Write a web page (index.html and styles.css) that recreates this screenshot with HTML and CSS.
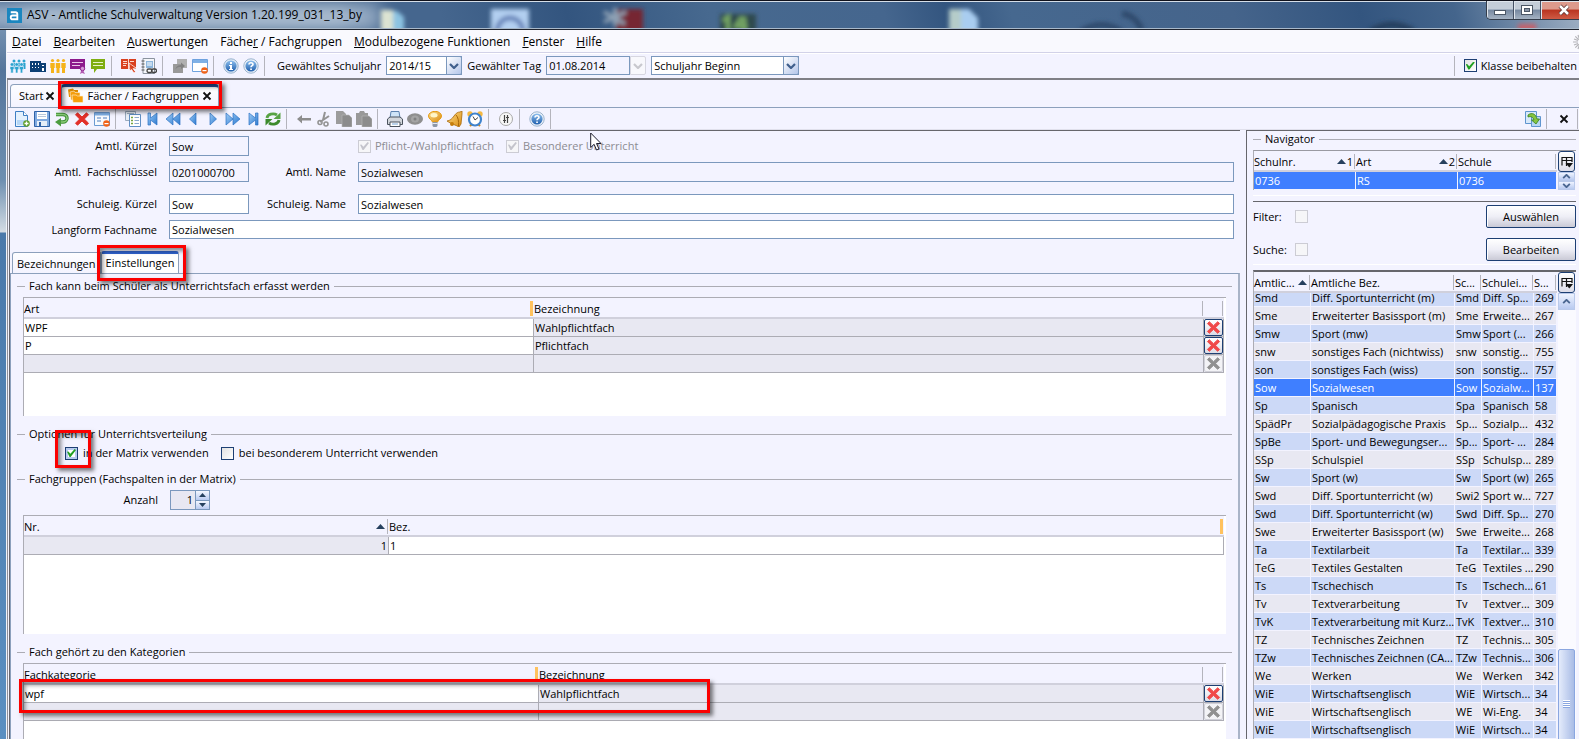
FILE: index.html
```html
<!DOCTYPE html>
<html lang="de">
<head>
<meta charset="utf-8">
<title>ASV - Amtliche Schulverwaltung</title>
<link rel="stylesheet" href="styles.css">
</head>
<body>
<svg class="symbols" aria-hidden="true">
  <defs>
    <linearGradient id="blue" x1="0" y1="0" x2="0" y2="1"><stop offset="0" stop-color="#8fc0ee"/><stop offset="1" stop-color="#1f5fae"/></linearGradient>
    <linearGradient id="arrowblue" x1="0" y1="0" x2="1" y2="1"><stop offset="0" stop-color="#9ccbf5"/><stop offset="1" stop-color="#2f7bd0"/></linearGradient>
    <linearGradient id="gold" x1="0" y1="0" x2="1" y2="1"><stop offset="0" stop-color="#ffe08a"/><stop offset="1" stop-color="#d98a10"/></linearGradient>
    <symbol id="people" viewBox="0 0 16 16"><g fill="currentColor"><circle cx="4" cy="3" r="1.500"/><circle cx="9" cy="3" r="1.500"/><circle cx="14" cy="3" r="1.500"/><path d="M2.500 5h3v6h-3zM7.500 5h3v6h-3zM12.500 5h3v6h-3z"/><g stroke="#f3f3ff" stroke-width=".6"><circle cx="2" cy="6.500" r="1.800"/><circle cx="6.700" cy="6.500" r="1.800"/><circle cx="11.500" cy="6.500" r="1.800"/><path d="M0 8.500h4v3H3.200V15H.8v-3.500H0zM4.700 8.500h4v3h-.8V15H5.500v-3.500h-.8zM9.500 8.500h4v3h-.8V15h-2.400v-3.500h-.8z"/></g></g></symbol>
    <symbol id="school" viewBox="0 0 16 16"><path d="M0 3h11v2h5v9H0z" fill="#0c3f75"/><path d="M2 5h1v2H2zM5 5h1v2H5zM8 5h1v2H8zM2 9h1v1H2zM5 9h1v1H5zM8 9h1v1H8zM12 7h2v1h-2zM12 10h2v3h-2z" fill="#fff"/></symbol>
    <symbol id="trio" viewBox="0 0 16 16"><g fill="#f5b31a"><circle cx="2.500" cy="2.500" r="1.600"/><circle cx="8" cy="2.500" r="1.600"/><circle cx="13.500" cy="2.500" r="1.600"/><path d="M.3 5h4.400v5H4v5H1v-5H.3zM5.800 5h4.400v5h-.7v5h-3v-5h-.7zM11.300 5h4.400v5H15v5h-3v-5h-.7z"/></g></symbol>
    <symbol id="certificate" viewBox="0 0 16 16"><path d="M0 1h15v10H0z" fill="#8c1a8c"/><path d="M2 4h11v1H2zM2 7h8v1H2z" fill="#e9c6e9"/><circle cx="12.500" cy="10.500" r="2.200" fill="#d79ad7" stroke="#8c1a8c"/><path d="M11 13l-1 3 2-1 3 1-1.500-3" fill="#b25cb2"/></symbol>
    <symbol id="board" viewBox="0 0 16 16"><path d="M1 1h14v10H7l-3 4v-4H1z" fill="#7fae12"/><path d="M3 4h10v1H3zM3 7h10v1H3z" fill="#e8f3c8"/></symbol>
    <symbol id="redbook" viewBox="0 0 16 16"><path d="M0 1h15v10H0z" fill="#d9401f"/><path d="M7 1h1v10H7zM2 3h4v1H2zM2 5h4v1H2zM2 7h3v1H2zM9 3h4v1H9z" fill="#fbd9cf"/><path d="M8 5l7 5-3 .6 2.500 3.200-1.500 1.200-2.500-3.500L9 13z" fill="#d9401f" stroke="#fff" stroke-width=".7"/></symbol>
    <symbol id="notebook" viewBox="0 0 16 16"><path d="M2 .5h11.500v15H2z" fill="#f4f6fa" stroke="#8b939e"/><path d="M5 3h7v7H5z" fill="#8db6dd"/><path d="M6 5h5M6 7h5" stroke="#fff"/><path d="M.5 3h3M.5 6h3M.5 9h3M.5 12h3" stroke="#555"/><rect x="6" y="11" width="5" height="3.500" rx="1.700" fill="#fff" stroke="#444" stroke-width="1.300"/><rect x="10.500" y="11" width="5" height="3.500" rx="1.700" fill="none" stroke="#444" stroke-width="1.300"/></symbol>
    <symbol id="graycopy" viewBox="0 0 16 16"><path d="M5 1h10v9H5z" fill="#b0b0b0"/><path d="M1 6h10v9H1z" fill="#999"/><path d="M3.500 11.500C4 8 7 7 9 7V4.500L13 8l-4 3V9c-2 0-4 0-5.500 2.500z" fill="#818181"/></symbol>
    <symbol id="windel" viewBox="0 0 16 16"><path d="M.5 1.500h15v12H.5z" fill="#fff" stroke="#6ea2de"/><path d="M1 2h14v3H1z" fill="#7fb0e6"/><circle cx="12.500" cy="12.500" r="3.300" fill="#f0631a"/><path d="M10.500 12h4v1.200h-4z" fill="#fff"/></symbol>
    <symbol id="info" viewBox="0 0 16 16"><circle cx="8" cy="8" r="7.200" fill="#dbe8f5" stroke="#9bb4ce"/><circle cx="8" cy="8" r="5.600" fill="url(#blue)"/><path d="M7 4h2v2H7zM6 7h3v4h1v1H6v-1h1V8H6z" fill="#fff"/></symbol>
    <symbol id="help" viewBox="0 0 16 16"><circle cx="8" cy="8" r="7.200" fill="#eef3fa" stroke="#9bb4ce"/><circle cx="8" cy="8" r="5.600" fill="url(#blue)"/><path d="M6 6.500a2 1.800 0 114 0c0 1.200-2 1.200-2 2.800" fill="none" stroke="#fff" stroke-width="1.600"/><path d="M7.200 10.500h1.700V12H7.200z" fill="#fff"/></symbol>
    <symbol id="folders" viewBox="0 0 16 16"><path d="M0 1.500l5-1 1 1.500h4v7H1z" fill="#e08c00"/><path d="M2 4l4-1 1 1.500h5V12H3z" fill="#f59e0c" stroke="#fff3dc" stroke-width=".6"/><path d="M4 7h4l1.500 1H15v6.500H5z" fill="#f59e0c" stroke="#fff3dc" stroke-width=".6"/></symbol>
    <symbol id="newdoc" viewBox="0 0 16 16"><path d="M1.500.5h8l4 4v11h-12z" fill="#e4f1fd" stroke="#3f7fc4"/><path d="M9.500.5v4h4" fill="#fff" stroke="#3f7fc4"/><path d="M3 9h9v5H3z" fill="#b4d6f6"/><circle cx="12.500" cy="12.500" r="3.300" fill="#5f9e2a"/><path d="M12.500 10.500v4M10.500 12.500h4" stroke="#fff" stroke-width="1.300"/></symbol>
    <symbol id="save" viewBox="0 0 16 16"><path d="M.5.5h15v15H.5z" fill="#7fa9e0" stroke="#2f62a8"/><path d="M3 1h10v7H3z" fill="#fff"/><path d="M4 3.500h8M4 5.500h8" stroke="#b9c8dc"/><path d="M3 10h10v5H3z" fill="#e6eef8"/><path d="M5 11h2v4H5z" fill="#2f62a8"/></symbol>
    <symbol id="undo" viewBox="0 0 16 16"><path d="M2 3.500h7a4 3.700 0 010 7.500H6" fill="none" stroke="#3f8f36" stroke-width="3.400"/><path d="M2 3.500h7a4 3.700 0 010 7.500H6" fill="none" stroke="#8ccc7a" stroke-width="1.400"/><path d="M7 7v8.500l-6-4.500z" fill="#4c9c40"/></symbol>
    <symbol id="cross" viewBox="0 0 16 16"><path d="M3.500 1.800L8 6l4.500-4.200 2 2L10.300 8l4.200 4.200-2 2L8 10l-4.500 4.200-2-2L5.700 8 1.500 3.800z" fill="currentColor" stroke="currentColor" stroke-linejoin="round"/></symbol>
    <symbol id="listdel" viewBox="0 0 16 16"><path d="M.5 1.500h15v13H.5z" fill="#f7fafe" stroke="#6b9bd2"/><path d="M1 2h14v2.500H1z" fill="#7fb0e6"/><path d="M3 7h4M3 10h4M9 7h4" stroke="#4d7fbf"/><circle cx="12.500" cy="12.500" r="3.300" fill="#f0631a"/><path d="M10.500 12h4v1.200h-4z" fill="#fff"/></symbol>
    <symbol id="sheet" viewBox="0 0 16 16"><path d="M.5.500h10v9H.5z" fill="#e8eef6" stroke="#9aaabd"/><path d="M4.500 3.500h11v12h-11z" fill="#fff" stroke="#5f8fc4"/><path d="M6 6.500h2M6 9.500h2M6 12.500h2" stroke="#76a53c" stroke-width="1.500"/><path d="M9.500 6.500H14M9.500 9.500H14M9.500 12.500H14" stroke="#8ba9cc"/><path d="M2 2.500h7" stroke="#9aaabd"/></symbol>
    <symbol id="first" viewBox="0 0 16 16"><path d="M3 2h2.500v5L12 2v12L5.500 9v5H3z" fill="url(#arrowblue)" stroke="#2f74c4" stroke-width=".7"/></symbol>
    <symbol id="fastback" viewBox="0 0 16 16"><path d="M8 2v12L1 8zM15 2v12L8 8z" fill="url(#arrowblue)" stroke="#2f74c4" stroke-width=".7"/></symbol>
    <symbol id="back" viewBox="0 0 16 16"><path d="M11 2v12L4.500 8z" fill="url(#arrowblue)" stroke="#2f74c4" stroke-width=".7"/></symbol>
    <symbol id="next" viewBox="0 0 16 16"><path d="M5 2v12l6.500-6z" fill="url(#arrowblue)" stroke="#2f74c4" stroke-width=".7"/></symbol>
    <symbol id="fastnext" viewBox="0 0 16 16"><path d="M1 2v12l7-6zM8 2v12l7-6z" fill="url(#arrowblue)" stroke="#2f74c4" stroke-width=".7"/></symbol>
    <symbol id="last" viewBox="0 0 16 16"><path d="M13 2h-2.500v5L4 2v12l6.500-5v5H13z" fill="url(#arrowblue)" stroke="#2f74c4" stroke-width=".7"/></symbol>
    <symbol id="refresh" viewBox="0 0 16 16"><path d="M2 7a6 4.500 0 0110-3" fill="none" stroke="#58a344" stroke-width="2.800"/><path d="M15.500 1.500v6.500H8.500z" fill="#58a344"/><path d="M14 9a6 4.500 0 01-10 3" fill="none" stroke="#3c8a2c" stroke-width="2.800"/><path d="M.5 14.500V8h7z" fill="#3c8a2c"/></symbol>
    <symbol id="grayleft" viewBox="0 0 16 16"><path d="M6 4v3h9v2.500H6v3L1 8z" fill="#8d8d8d"/></symbol>
    <symbol id="scissors" viewBox="0 0 16 16"><path d="M9 1L7 9M13 5l-9 6" stroke="#949494" stroke-width="2"/><circle cx="4" cy="11.500" r="2" fill="none" stroke="#949494" stroke-width="1.600"/><circle cx="10" cy="13" r="2" fill="none" stroke="#949494" stroke-width="1.600"/></symbol>
    <symbol id="pages" viewBox="0 0 16 16"><path d="M0 0h7l3 3v10H0z" fill="#9c9c9c"/><path d="M6 4h7l3 3v9H6z" fill="#8c8c8c" stroke="#b9b9b9" stroke-width=".6"/></symbol>
    <symbol id="paste" viewBox="0 0 16 16"><path d="M0 2h3l1-2h4l1 2h3v12H0z" fill="#999"/><path d="M6 5h7l3 3v8H6z" fill="#8c8c8c" stroke="#b9b9b9" stroke-width=".6"/></symbol>
    <symbol id="printer" viewBox="0 0 16 16"><path d="M4 .5h8l1 6.500H3z" fill="#cfe4f8" stroke="#5d83b0"/><path d="M.5 8L3 6h10l2.500 2v5.500H.5z" fill="#d2d6dc" stroke="#4b535e"/><path d="M3 11h10v4.500H3z" fill="#fff" stroke="#4b535e"/><path d="M5 13h6" stroke="#76a5d6"/></symbol>
    <symbol id="eye" viewBox="0 0 16 16"><ellipse cx="8" cy="8" rx="8" ry="5.700" fill="#8f8f8f"/><ellipse cx="8" cy="8" rx="4" ry="3.500" fill="#a4a4a4"/><circle cx="8" cy="8" r="1.500" fill="#808080"/></symbol>
    <symbol id="bulb" viewBox="0 0 16 16"><path d="M5.500 11C5 9 1.500 8 1.500 5a6.500 4.700 0 0113 0c0 3-3.500 4-4 6z" fill="url(#gold)" stroke="#e59a12"/><ellipse cx="7" cy="4.200" rx="3.500" ry="2.200" fill="#fff6c8"/><path d="M5.500 11h5v4l-1 1h-3l-1-1z" fill="#8d97a8"/><path d="M5.500 12.500h5" stroke="#e4e8ee"/></symbol>
    <symbol id="bell" viewBox="0 0 16 16"><path d="M13 1l2-1v3l-1 10-2 3C9 14 4 13 0 10c3-.5 5-2 7-5s4-4 6-4z" fill="url(#gold)" stroke="#a8680a" stroke-width=".8"/><path d="M9 4c2 2 3 6 2.500 11" stroke="#a8680a" fill="none"/><circle cx="5" cy="13" r="2" fill="#c57d0c"/></symbol>
    <symbol id="clock" viewBox="0 0 16 16"><circle cx="3" cy="3" r="2.700" fill="#f5b842"/><circle cx="13" cy="3" r="2.700" fill="#f5b842"/><path d="M3 15l2-2M13 15l-2-2" stroke="#d08a1a" stroke-width="2"/><circle cx="8" cy="8.500" r="6" fill="#fff" stroke="#3f83cc" stroke-width="2.200"/><path d="M6 5.500l2 3.500 3-2.500" fill="none" stroke="#444"/></symbol>
    <symbol id="sliders" viewBox="0 0 16 16"><circle cx="8" cy="8" r="6.500" fill="#f8f8f8" stroke="#a9a9a9"/><path d="M6.500 4v8M9.500 4v8M5 9.500h3M8 6.500h3" stroke="#444" stroke-width="1.200"/></symbol>
    <symbol id="export" viewBox="0 0 16 16"><path d="M.5.500h11v12H.5z" fill="#d8e9fa" stroke="#5f95cf"/><path d="M6.500 5.500h9v10h-9z" fill="#b9d7f4" stroke="#5f95cf"/><path d="M3 4c4-3 8-1 9 4h2.500L11 13 6.500 9H9C8 6 6 5 3 6z" fill="#86c440" stroke="#37801c" stroke-width=".8"/></symbol>
    <symbol id="close" viewBox="0 0 10 10"><path d="M1.500 1.500l7 7M8.500 1.500l-7 7" stroke="#111" stroke-width="1.800"/></symbol>
    <symbol id="down" viewBox="0 0 10 6"><path d="M1 1l4 4 4-4" fill="none" stroke="currentColor" stroke-width="2.200"/></symbol>
    <symbol id="up" viewBox="0 0 10 6"><path d="M1 5l4-4 4 4" fill="none" stroke="currentColor" stroke-width="2.200"/></symbol>
    <symbol id="sort" viewBox="0 0 9 5"><path d="M4.500 0L9 5H0z" fill="#26405e"/></symbol>
    <symbol id="columns" viewBox="0 0 12 12"><path d="M1 9.500V1.500h10V6M1 4.500h10M5.500 2v8" fill="none" stroke="#111" stroke-width="1.200"/><path d="M4.500 7h7.500l-3.700 4.500z" fill="#111"/></symbol>
  </defs>
</svg>

<div class="window">
  <header class="titlebar">
    <svg class="glass" aria-hidden="true">
      <defs><filter id="soft" x="-30%" y="-60%" width="160%" height="220%"><feGaussianBlur stdDeviation="2"/></filter><filter id="wide" x="-40%" y="-200%" width="180%" height="500%"><feGaussianBlur stdDeviation="9"/></filter></defs>
      <rect x="-20" y="2" width="400" height="26" fill="#c3d2e2" opacity=".7" filter="url(#wide)"/>
      <rect x="20" y="8" width="330" height="14" fill="#dbe5ee" opacity=".45" filter="url(#wide)"/>
      <g filter="url(#soft)">
        <rect x="381" y="8" width="12" height="22" fill="#dce3d2"/><path d="M393 9h4l7 6v15h-11z" fill="#8cc3e2"/>
        <rect x="491" y="7" width="38" height="24" fill="#b2cff0"/><path d="M497 30a13 14 0 0126 0" fill="none" stroke="#6582b8" stroke-width="5"/>
        <rect x="616" y="7" width="27" height="24" fill="#762733"/><path d="M604 20l22-10M615 6v18M604 10l21 12" stroke="#8fa2b5" stroke-width="4"/>
        <rect x="720" y="12" width="36" height="20" fill="#2e4a4d"/><path d="M723 19l5-4v14M742 15l-6 9h11M744 15v14" fill="none" stroke="#77a865" stroke-width="4"/>
        <path d="M949 7h12v24h-12z" fill="#b5ccc9"/><path d="M961 7h8l9 9v15h-17z" fill="#a9cdf0"/>
        <path d="M1080 30q22-14 42 0M1122 12q12 0 20 16" fill="none" stroke="#2d4a6c" stroke-width="6"/>
        <path d="M1370 30q22-14 44 0" fill="none" stroke="#263f5e" stroke-width="7"/><rect x="1518" y="22" width="18" height="7" fill="#c4606a"/>
      </g>
    </svg>
    <svg class="app-icon" viewBox="0 0 16 16" aria-hidden="true"><rect width="16" height="16" fill="#1b86bf"/><path d="M4 4.500h5a2 2 0 012 2V12H6a2 2 0 010-4h5" fill="none" stroke="#fff" stroke-width="2"/></svg>
    <h1>ASV - Amtliche Schulverwaltung Version 1.20.199_031_13_by</h1>
    <div class="window-buttons">
      <button type="button" aria-label="Minimieren"><svg viewBox="0 0 14 12"><rect x="1.500" y="6.500" width="11" height="4" fill="#fff" stroke="#4c5766"/></svg></button>
      <button type="button" aria-label="Maximieren"><svg viewBox="0 0 14 12"><rect x="1.500" y="1.500" width="11" height="9" fill="#fff" stroke="#4c5766"/><rect x="4.500" y="4.500" width="5" height="3" fill="#8b96a8" stroke="#4c5766"/></svg></button>
      <button type="button" class="shut" aria-label="Schließen"><svg viewBox="0 0 14 12"><path d="M3 2l8 8M11 2l-8 8" stroke="#5a3232" stroke-width="4"/><path d="M3 2l8 8M11 2l-8 8" stroke="#fff" stroke-width="2.500"/></svg></button>
    </div>
  </header>

  <div class="client">
    <nav class="menu">
      <a href="#"><u>D</u>atei</a><a href="#"><u>B</u>earbeiten</a><a href="#"><u>A</u>uswertungen</a><a href="#">Fäche<u>r</u> / Fachgruppen</a><a href="#"><u>M</u>odulbezogene Funktionen</a><a href="#"><u>F</u>enster</a><a href="#"><u>H</u>ilfe</a>
      <svg class="busy" viewBox="0 0 16 16" aria-hidden="true"><path d="M8 0v5M8 11v5M0 8h5M11 8h5M2.300 2.300l3.500 3.500M10.200 10.200l3.500 3.500M2.300 13.700l3.500-3.500M13.700 2.300l-3.500 3.500M5 1l1.500 4M1 5l4 1.500M1 11l4-1.500M5 15l1.500-4" stroke="#b4b4b8" stroke-width="1.200"/></svg>
    </nav>

    <div class="toolbar main-tools">
      <button type="button" class="tool sky" aria-label="Schüler"><svg><use href="#people"/></svg></button>
      <button type="button" class="tool" aria-label="Schule"><svg><use href="#school"/></svg></button>
      <button type="button" class="tool" aria-label="Klassen"><svg><use href="#trio"/></svg></button>
      <button type="button" class="tool" aria-label="Zeugnisse"><svg><use href="#certificate"/></svg></button>
      <button type="button" class="tool" aria-label="Unterricht"><svg><use href="#board"/></svg></button>
      <span class="sep"></span>
      <button type="button" class="tool" aria-label="Buch"><svg><use href="#redbook"/></svg></button>
      <button type="button" class="tool" aria-label="Notizbuch"><svg><use href="#notebook"/></svg></button>
      <span class="sep"></span>
      <button type="button" class="tool" aria-label="Fenster kopieren"><svg><use href="#graycopy"/></svg></button>
      <button type="button" class="tool" aria-label="Fenster schließen"><svg><use href="#windel"/></svg></button>
      <span class="sep"></span>
      <button type="button" class="tool" aria-label="Information"><svg><use href="#info"/></svg></button>
      <button type="button" class="tool" aria-label="Hilfe"><svg><use href="#help"/></svg></button>
      <span class="sep"></span>
      <label class="tool-label" for="jahr">Gewähltes Schuljahr</label>
      <span class="combo year"><select id="jahr"><option>2014/15</option></select><span class="arrow"><svg><use href="#down"/></svg></span></span>
      <label class="tool-label" for="tag">Gewählter Tag</label>
      <span class="combo day"><input id="tag" value="01.08.2014" readonly><span class="arrow off"><svg><use href="#down"/></svg></span></span>
      <span class="combo period"><select aria-label="Zeitraum"><option>Schuljahr Beginn</option></select><span class="arrow"><svg><use href="#down"/></svg></span></span>
      <label class="keep"><input type="checkbox" checked>Klasse beibehalten</label>
    </div>

    <div class="workspace">
      <div class="doc-tabs">
        <button type="button" class="doc-tab">Start<svg class="x"><use href="#close"/></svg></button>
        <button type="button" class="doc-tab current"><svg class="folder"><use href="#folders"/></svg>Fächer / Fachgruppen<svg class="x"><use href="#close"/></svg><span class="mark mark-tab"></span></button>
      </div>

      <div class="toolbar doc-tools">
        <button type="button" class="tool" aria-label="Neu"><svg><use href="#newdoc"/></svg></button>
        <button type="button" class="tool" aria-label="Speichern"><svg><use href="#save"/></svg></button>
        <button type="button" class="tool" aria-label="Rückgängig"><svg><use href="#undo"/></svg></button>
        <button type="button" class="tool red" aria-label="Löschen"><svg><use href="#cross"/></svg></button>
        <button type="button" class="tool" aria-label="Liste leeren"><svg><use href="#listdel"/></svg></button>
        <span class="sep"></span>
        <button type="button" class="tool" aria-label="Liste"><svg><use href="#sheet"/></svg></button>
        <button type="button" class="tool" aria-label="Erster"><svg><use href="#first"/></svg></button>
        <button type="button" class="tool" aria-label="Schnell zurück"><svg><use href="#fastback"/></svg></button>
        <button type="button" class="tool" aria-label="Zurück"><svg><use href="#back"/></svg></button>
        <button type="button" class="tool" aria-label="Vor"><svg><use href="#next"/></svg></button>
        <button type="button" class="tool" aria-label="Schnell vor"><svg><use href="#fastnext"/></svg></button>
        <button type="button" class="tool" aria-label="Letzter"><svg><use href="#last"/></svg></button>
        <button type="button" class="tool" aria-label="Aktualisieren"><svg><use href="#refresh"/></svg></button>
        <span class="sep"></span>
        <button type="button" class="tool" aria-label="Pfeil"><svg><use href="#grayleft"/></svg></button>
        <button type="button" class="tool" aria-label="Ausschneiden"><svg><use href="#scissors"/></svg></button>
        <button type="button" class="tool" aria-label="Kopieren"><svg><use href="#pages"/></svg></button>
        <button type="button" class="tool" aria-label="Einfügen"><svg><use href="#paste"/></svg></button>
        <span class="sep"></span>
        <button type="button" class="tool" aria-label="Drucken"><svg><use href="#printer"/></svg></button>
        <button type="button" class="tool" aria-label="Ansicht"><svg><use href="#eye"/></svg></button>
        <button type="button" class="tool" aria-label="Tipp"><svg><use href="#bulb"/></svg></button>
        <button type="button" class="tool" aria-label="Erinnerung"><svg><use href="#bell"/></svg></button>
        <button type="button" class="tool" aria-label="Wecker"><svg><use href="#clock"/></svg></button>
        <span class="sep"></span>
        <button type="button" class="tool" aria-label="Einstellungen"><svg><use href="#sliders"/></svg></button>
        <span class="sep"></span>
        <button type="button" class="tool" aria-label="Hilfe zum Modul"><svg><use href="#help"/></svg></button>
        <span class="sep"></span>
        <span class="tools-right">
          <button type="button" class="tool" aria-label="Exportieren"><svg><use href="#export"/></svg></button>
          <span class="sep"></span>
          <button type="button" class="tool small" aria-label="Modul schließen"><svg><use href="#close"/></svg></button>
          <span class="sep"></span>
        </span>
      </div>

      <div class="panes">
        <main class="editor">
          <form class="fields">
            <label for="f1">Amtl. Kürzel</label><input id="f1" value="Sow" readonly>
            <div class="flags">
              <label><input type="checkbox" checked disabled>Pflicht-/Wahlpflichtfach</label>
              <label><input type="checkbox" checked disabled>Besonderer Unterricht</label>
              <svg class="pointer" viewBox="0 0 12 19" aria-hidden="true"><path d="M.7 1v14.500l3.400-3.200L6.500 18l2.500-1-2.500-5.500H11z" fill="#fff" stroke="#1c1c2c"/></svg>
            </div>
            <label for="f2">Amtl.&nbsp; Fachschlüssel</label><input id="f2" value="0201000700" readonly>
            <label for="f3">Amtl. Name</label><input id="f3" value="Sozialwesen" readonly>
            <label for="f4" class="apart">Schuleig. Kürzel</label><input id="f4" class="apart" value="Sow">
            <label for="f5" class="apart">Schuleig. Name</label><input id="f5" class="apart" value="Sozialwesen">
            <label for="f6">Langform Fachname</label><input id="f6" class="across" value="Sozialwesen">
          </form>

          <div class="sub-tabs">
            <button type="button" class="sub-tab">Bezeichnungen</button>
            <button type="button" class="sub-tab current">Einstellungen<span class="mark mark-sub"></span></button>
          </div>

          <div class="sheet">
            <fieldset>
              <legend>Fach kann beim Schüler als Unterrichtsfach erfasst werden</legend>
              <div class="grid-area">
                <table class="grid">
                  <colgroup><col class="c-art"><col><col class="c-del"></colgroup>
                  <thead><tr><th class="gold">Art</th><th>Bezeichnung</th><th></th></tr></thead>
                  <tbody>
                    <tr><td class="edit">WPF</td><td>Wahlpflichtfach</td><td class="del"><button type="button" aria-label="WPF löschen"><svg><use href="#cross"/></svg></button></td></tr>
                    <tr><td class="edit">P</td><td>Pflichtfach</td><td class="del"><button type="button" aria-label="P löschen"><svg><use href="#cross"/></svg></button></td></tr>
                    <tr><td></td><td></td><td class="del"><button type="button" disabled aria-label="Löschen"><svg><use href="#cross"/></svg></button></td></tr>
                  </tbody>
                </table>
              </div>
            </fieldset>

            <fieldset>
              <legend>Optionen für Unterrichtsverteilung</legend>
              <div class="options">
                <label class="marked"><input type="checkbox" class="focus" checked>in der Matrix verwenden<span class="mark mark-check"></span></label>
                <label><input type="checkbox">bei besonderem Unterricht verwenden</label>
              </div>
            </fieldset>

            <fieldset>
              <legend>Fachgruppen (Fachspalten in der Matrix)</legend>
              <div class="count">
                <label for="anzahl">Anzahl</label>
                <span class="spinner"><input id="anzahl" value="1" readonly><span class="steps"><button type="button" aria-label="Mehr"><svg><use href="#sort"/></svg></button><button type="button" aria-label="Weniger"><svg class="turned"><use href="#sort"/></svg></button></span></span>
              </div>
              <div class="grid-area">
                <table class="grid">
                  <colgroup><col class="c-nr"><col></colgroup>
                  <thead><tr><th>Nr.<svg class="sort"><use href="#sort"/></svg></th><th class="gold">Bez.</th></tr></thead>
                  <tbody><tr><td class="num">1</td><td class="edit">1</td></tr></tbody>
                </table>
              </div>
            </fieldset>

            <fieldset class="rest">
              <legend>Fach gehört zu den Kategorien</legend>
              <div class="grid-area">
                <table class="grid">
                  <colgroup><col class="c-kat"><col><col class="c-del"></colgroup>
                  <thead><tr><th class="gold">Fachkategorie</th><th>Bezeichnung</th><th></th></tr></thead>
                  <tbody>
                    <tr><td class="edit">wpf</td><td>Wahlpflichtfach</td><td class="del"><button type="button" aria-label="wpf löschen"><svg><use href="#cross"/></svg></button></td></tr>
                    <tr><td></td><td></td><td class="del"><button type="button" disabled aria-label="Löschen"><svg><use href="#cross"/></svg></button></td></tr>
                  </tbody>
                </table>
                <span class="mark mark-row"></span>
              </div>
            </fieldset>
          </div>
        </main>

        <aside class="navigator">
          <fieldset class="nav-head">
            <legend>Navigator</legend>
            <div class="school-list">
              <table class="list">
                <colgroup><col class="s1"><col class="s2"><col></colgroup>
                <thead><tr><th>Schulnr.<span class="order"><svg class="sort"><use href="#sort"/></svg>1</span></th><th>Art<span class="order"><svg class="sort"><use href="#sort"/></svg>2</span></th><th>Schule</th></tr></thead>
                <tbody><tr class="selected"><td>0736</td><td>RS</td><td>0736</td></tr></tbody>
              </table>
              <div class="rail">
                <button type="button" class="cols" aria-label="Spalten wählen"><svg><use href="#columns"/></svg></button>
                <button type="button" class="half" aria-label="Nach oben"><svg><use href="#up"/></svg></button>
                <button type="button" class="half" aria-label="Nach unten"><svg><use href="#down"/></svg></button>
              </div>
            </div>
          </fieldset>
          <div class="choose">
            <div class="choose-row"><label for="filter">Filter:</label><input id="filter" type="checkbox" disabled><button type="button" class="push">Auswählen</button></div>
            <div class="choose-row"><label for="suche">Suche:</label><input id="suche" type="checkbox" disabled><button type="button" class="push">Bearbeiten</button></div>
          </div>
          <div class="subject-list">
            <div class="subject-table">
              <table class="list">
                <colgroup><col class="n1"><col><col class="n3"><col class="n4"><col class="n5"></colgroup>
                <thead><tr><th>Amtlic...<svg class="sort"><use href="#sort"/></svg></th><th>Amtliche Bez.</th><th>Sc...</th><th>Schulei...</th><th>S...</th></tr></thead>
              </table>
              <div class="scroller">
                <table class="list striped">
                  <colgroup><col class="n1"><col><col class="n3"><col class="n4"><col class="n5"></colgroup>
                  <tbody>
                    <tr><td>Smd</td><td>Diff. Sportunterricht (m)</td><td>Smd</td><td>Diff. Sp...</td><td>269</td></tr>
                    <tr><td>Sme</td><td>Erweiterter Basissport (m)</td><td>Sme</td><td>Erweite...</td><td>267</td></tr>
                    <tr><td>Smw</td><td>Sport (mw)</td><td>Smw</td><td>Sport (...</td><td>266</td></tr>
                    <tr><td>snw</td><td>sonstiges Fach (nichtwiss)</td><td>snw</td><td>sonstig...</td><td>755</td></tr>
                    <tr><td>son</td><td>sonstiges Fach (wiss)</td><td>son</td><td>sonstig...</td><td>757</td></tr>
                    <tr class="selected"><td>Sow</td><td>Sozialwesen</td><td>Sow</td><td>Sozialw...</td><td>137</td></tr>
                    <tr><td>Sp</td><td>Spanisch</td><td>Spa</td><td>Spanisch</td><td>58</td></tr>
                    <tr><td>SpädPr</td><td>Sozialpädagogische Praxis</td><td>Sp...</td><td>Sozialp...</td><td>432</td></tr>
                    <tr><td>SpBe</td><td>Sport- und Bewegungser...</td><td>Sp...</td><td>Sport- ...</td><td>284</td></tr>
                    <tr><td>SSp</td><td>Schulspiel</td><td>SSp</td><td>Schulsp...</td><td>289</td></tr>
                    <tr><td>Sw</td><td>Sport (w)</td><td>Sw</td><td>Sport (w)</td><td>265</td></tr>
                    <tr><td>Swd</td><td>Diff. Sportunterricht (w)</td><td>Swi2</td><td>Sport w...</td><td>727</td></tr>
                    <tr><td>Swd</td><td>Diff. Sportunterricht (w)</td><td>Swd</td><td>Diff. Sp...</td><td>270</td></tr>
                    <tr><td>Swe</td><td>Erweiterter Basissport (w)</td><td>Swe</td><td>Erweite...</td><td>268</td></tr>
                    <tr><td>Ta</td><td>Textilarbeit</td><td>Ta</td><td>Textilar...</td><td>339</td></tr>
                    <tr><td>TeG</td><td>Textiles Gestalten</td><td>TeG</td><td>Textiles ...</td><td>290</td></tr>
                    <tr><td>Ts</td><td>Tschechisch</td><td>Ts</td><td>Tschech...</td><td>61</td></tr>
                    <tr><td>Tv</td><td>Textverarbeitung</td><td>Tv</td><td>Textver...</td><td>309</td></tr>
                    <tr><td>TvK</td><td>Textverarbeitung mit Kurz...</td><td>TvK</td><td>Textver...</td><td>310</td></tr>
                    <tr><td>TZ</td><td>Technisches Zeichnen</td><td>TZ</td><td>Technis...</td><td>305</td></tr>
                    <tr><td>TZw</td><td>Technisches Zeichnen (CA...</td><td>TZw</td><td>Technis...</td><td>306</td></tr>
                    <tr><td>We</td><td>Werken</td><td>We</td><td>Werken</td><td>342</td></tr>
                    <tr><td>WiE</td><td>Wirtschaftsenglisch</td><td>WiE</td><td>Wirtsch...</td><td>34</td></tr>
                    <tr><td>WiE</td><td>Wirtschaftsenglisch</td><td>WE</td><td>Wi-Eng.</td><td>34</td></tr>
                    <tr><td>WiE</td><td>Wirtschaftsenglisch</td><td>WiE</td><td>Wirtsch...</td><td>34</td></tr>
                  </tbody>
                </table>
              </div>
            </div>
            <div class="rail">
              <button type="button" class="cols" aria-label="Spalten wählen"><svg><use href="#columns"/></svg></button>
              <button type="button" class="scroll-up" aria-label="Nach oben"><svg><use href="#up"/></svg></button>
              <div class="track"><span class="thumb"></span></div>
            </div>
          </div>
        </aside>
      </div>
    </div>
  </div>
</div>
</body>
</html>
```
FILE: styles.css
```css
* { box-sizing: border-box; }

body {
  margin: 0;
  font: 11px/16px "Open Sans", "Noto Sans", sans-serif;
  color: #000;
}

button, input, select { font: inherit; color: inherit; margin: 0; }
button { padding: 0; border: 0; background: none; }
svg { display: block; flex: none; }
.symbols { position: absolute; width: 0; height: 0; }

.window {
  display: flex;
  flex-direction: column;
  height: 100vh;
  overflow: hidden;
  padding-left: 6px;
  background: linear-gradient(to bottom, #8aa4bf 0, #54759b 70px, #6d8fb0 180px, #d4dce4 232px, #4a79aa 233px, #5a8fc1 100%);
}

/* title bar */
.titlebar {
  position: relative;
  display: flex;
  flex: none;
  align-items: center;
  height: 30px;
  margin-left: -6px;
  padding-left: 7px;
  gap: 5px;
  border-top: 1px solid #10121c;
  border-bottom: 1px solid #20242e;
  background: linear-gradient(75deg, #45668e 0, #45668e 28%, #33557f 36%, #47698f 45%, #45668e 56%, #33557f 60%, #46688f 64%, #45648b 78%, #33557f 86%, #44658c 92%, #9fb0c4 100%);
  box-shadow: inset 0 1px #d5dee8, inset 0 -1px #a9b9ca;
}
.glass { position: absolute; inset: 1px 0 1px; width: 100%; height: 26px; }
.app-icon { position: relative; width: 15px; height: 15px; }
h1 { position: relative; margin: 0; font-size: 12px; font-weight: 400; }
.window-buttons {
  position: relative;
  display: flex;
  align-self: flex-start;
  margin-left: auto;
  border: 1px solid #333c4a;
  border-width: 0 0 1px 1px;
  border-radius: 0 0 0 5px;
  overflow: hidden;
}
.window-buttons button {
  display: grid;
  place-items: center;
  width: 27px;
  height: 18px;
  border-right: 1px solid #465164;
  background: linear-gradient(#c4cdd8 45%, #7688a0 50%, #a5b2c2);
  box-shadow: inset 1px 1px #dfe5ec;
}
.window-buttons .shut { width: 38px; padding-left: 8px; border-right: 0; background: linear-gradient(#dd9a8c 45%, #b93420 50%, #cf5b45); }
.window-buttons svg { width: 14px; height: 12px; }

/* client area */
.client { display: flex; flex: 1; flex-direction: column; min-height: 0; background: #f3f3ff; border-left: 1px solid #f0f3f8; }
.menu {
  position: relative;
  display: flex;
  flex: none;
  align-items: center;
  gap: 12px;
  height: 23px;
  padding: 2px 0 0 5px;
  background: #f9f9fe;
  border-bottom: 1px solid #d2d2e8;
  font-size: 12px;
  overflow: hidden;
}
.menu a { color: #000; text-decoration: none; }
.busy { position: absolute; right: -10px; width: 16px; height: 16px; }

.toolbar { display: flex; flex: none; align-items: center; }
.tool { display: grid; place-items: center; width: 20px; height: 20px; flex: none; }
.tool svg { width: 16px; height: 16px; }
.tool.small svg { width: 10px; height: 10px; }
.sky { color: #2aa3cf; }
.red { color: #e2302a; }
.sep { flex: none; width: 1px; height: 20px; margin: 0 7px 0 3px; background: #b4b4bc; }
.main-tools { height: 27px; padding: 0 0 1px 1px; border-bottom: 2px solid #7f7f86; border-top: 1px solid #fff; }
.tool-label { margin: 0 5px; white-space: nowrap; }

.combo { display: grid; grid-template-columns: 1fr 16px; height: 19px; }
.combo select, .combo input { grid-area: 1 / 1 / 2 / 3; width: 100%; height: 19px; padding: 0 2px; border: 1px solid #7b98bd; border-radius: 0; background: #fff; appearance: none; }
.combo input { background: #f3f3ff; margin-right: 16px; width: auto; min-width: 0; }
.arrow { grid-area: 1 / 2; display: grid; place-items: center; border: 1px solid #7b98bd; border-radius: 0 2px 2px 0; background: linear-gradient(135deg, #fff, #b4c6ea); color: #3f5f8c; pointer-events: none; }
.arrow.off { border-color: #d6d6e0; background: #f8f8fc; color: #c8c8ce; }
.arrow svg { width: 10px; height: 6px; }
.year { width: 76px; }
.day { width: 100px; }
.period { width: 148px; margin-left: 5px; }

input[type="checkbox"] {
  appearance: none;
  flex: none;
  width: 13px;
  height: 13px;
  border: 1px solid #1d3f73;
  background: linear-gradient(135deg, #e2e2e2, #fff);
  display: grid;
  place-items: center;
}
input[type="checkbox"]:checked::before {
  content: "";
  width: 9px;
  height: 8px;
  background: #22a022;
  clip-path: polygon(0 35%, 15% 30%, 38% 58%, 85% 0, 100% 12%, 40% 100%, 28% 100%);
}
input[type="checkbox"]:disabled { border-color: #ccccd4; background: #f6f6f8; }
input[type="checkbox"]:disabled:checked::before { background: #c4c4cc; }
input[type="checkbox"].focus { background: #fff; box-shadow: inset 0 0 0 2px #b7cbf0; }

.keep { display: flex; align-items: center; gap: 4px; height: 20px; margin-left: auto; padding: 0 2px 0 9px; border-left: 1px solid #b4b4bc; white-space: nowrap; }

.workspace { display: flex; flex: 1; flex-direction: column; min-height: 0; border-left: 1px solid #8f8f98; }
.doc-tabs { display: flex; flex: none; align-items: flex-end; height: 28px; padding-left: 2px; border-bottom: 1px solid #8ca0bc; }
.doc-tab {
  position: relative;
  display: flex;
  align-items: center;
  gap: 2px;
  height: 23px;
  padding: 0 5px 0 8px;
  border: 1px solid #8ca0bc;
  border-bottom: 0;
  border-radius: 4px 0 0 0;
  background: linear-gradient(#fdfdff, #f3f3ff);
  white-space: nowrap;
}
.doc-tab.current { padding: 0 6px 3px; gap: 3px; border-top: 3px solid #24509c; border-radius: 4px 4px 0 0; background: linear-gradient(#fff, #f3f3ff); }
.x { width: 10px; height: 10px; }
.folder { width: 16px; height: 16px; }

/* red callouts laid over the controls they point at */
.mark { position: absolute; z-index: 3; border: 3px solid #fb0000; box-shadow: 3px 3px 4px rgba(0, 0, 0, .5), inset 3px 3px 4px rgba(0, 0, 0, .45); pointer-events: none; }
.mark-tab { inset: -6px -4px -2px -4px; }
.mark-sub { inset: -9px -8px -8px -5px; }
.mark-check { left: -10px; top: -15px; width: 36px; height: 38px; }
.mark-row { left: -5px; top: 15px; width: 691px; height: 34px; }

.doc-tools { height: 22px; padding-left: 4px; border-bottom: 1px solid #e0e0ec; }
.tools-right { display: flex; align-items: center; margin-left: auto; }
.tools-right .sep:last-child { margin-right: 1px; }

.panes { display: flex; flex: 1; gap: 6px; min-height: 0; padding-left: 1px; }
.editor { position: relative; display: flex; flex: 1; flex-direction: column; min-width: 0; border-top: 1px solid #66666c; border-left: 1px solid #66666c; }

.fields {
  display: grid;
  flex: none;
  grid-template-columns: 147px 80px 85px 1fr;
  gap: 6px 12px;
  align-items: center;
  padding: 5px 6px 12px 0;
}
.fields > label { text-align: right; white-space: nowrap; }
.fields > input { width: 100%; min-width: 0; height: 20px; padding: 0 2px; border: 1px solid #7b98bd; background: #fff; }
.fields > input[readonly] { background: #f3f3ff; }
.fields > .apart { margin-top: 6px; }
.fields > .across { grid-column: 2 / 5; height: 19px; }
.flags { grid-column: 4; position: relative; display: flex; gap: 12px; color: #8c8c92; }
.flags label { display: flex; align-items: center; gap: 4px; white-space: nowrap; }
.pointer { position: absolute; left: 232px; top: -6px; width: 12px; height: 19px; }

.sub-tabs { display: flex; flex: none; align-items: flex-end; height: 22px; padding-left: 2px; }
.sub-tab { position: relative; height: 21px; padding: 2px 4px 0; border: 1px solid #8ca0bc; border-bottom: 0; border-radius: 3px 0 0 0; background: linear-gradient(#fdfdff, #f3f3ff); white-space: nowrap; }
.sub-tab.current { height: 22px; padding: 0 4px 2px; border-top: 3px solid #2f62cc; border-radius: 3px 3px 0 0; background: #fff; }

.sheet { display: flex; flex: 1; flex-direction: column; gap: 10px; min-height: 0; padding: 4px 6px 0; border: 1px solid #8ca0bc; border-bottom: 0; border-right: 2px solid #a9b4c8; overflow: hidden; }
fieldset { min-width: 0; margin: 0; padding: 3px 6px 0; border: 0; border-top: 1px solid #acacb4; }
legend { margin-left: 2px; padding: 0 4px; height: 16px; }
.sheet > fieldset { flex: none; }
.sheet > fieldset.rest { flex: 1; display: flex; flex-direction: column; }
.rest .grid-area { flex: 1; }

.grid-area { position: relative; min-height: 119px; padding-right: 2px; border-top: 1px solid #acacb4; border-left: 1px solid #acacb4; background: #fff; }
table { width: 100%; table-layout: fixed; border-collapse: separate; border-spacing: 0; }
th { position: relative; height: 21px; padding: 2px 0 0; border-bottom: 2px solid #d0d0dc; background: #f3f3ff; font-weight: 400; text-align: left; white-space: nowrap; }
th::after { content: ""; position: absolute; top: 3px; right: 1px; width: 1px; height: 15px; background: #b4b4bc; }
th.gold::after { width: 3px; background: #ffc25e; }
td { height: 18px; padding: 0 1px; line-height: 17px; white-space: nowrap; overflow: hidden; }
.grid td { border-right: 1px solid #acacb4; border-bottom: 1px solid #acacb4; background: #e8e8f2; }
.grid td.edit { background: #fff; }
.grid td.num { text-align: right; }
.grid td.del { padding: 0; }
.c-art { width: 510px; }
.c-kat { width: 515px; }
.c-nr { width: 365px; }
.c-del { width: 20px; }
.del button { display: grid; place-items: center; width: 19px; height: 17px; border: 1px solid #1d3f73; border-radius: 2px; background: linear-gradient(#fff, #dcdce6); color: #f04848; }
.del button:disabled { border-color: #d0d0d8; color: #909090; background: #f3f3f6; }
.del svg { width: 15px; height: 15px; }
.sort { position: absolute; right: 4px; top: 8px; width: 9px; height: 5px; }

.options { display: flex; gap: 12px; padding-left: 42px; }
.options label { position: relative; display: flex; align-items: center; gap: 5px; }
.count { display: flex; align-items: center; gap: 12px; margin-bottom: 5px; }
.count label { width: 135px; text-align: right; }
.spinner { display: flex; height: 20px; border: 1px solid #7b98bd; }
.spinner input { width: 24px; padding: 0 2px; border: 0; background: #e8e8f2; text-align: right; }
.steps { display: flex; flex-direction: column; border-left: 1px solid #7b98bd; }
.steps button { display: grid; place-items: center; flex: 1; width: 13px; background: linear-gradient(#f4f7ff, #b9caf0); }
.steps button + button { border-top: 1px solid #7b98bd; }
.steps svg { width: 7px; height: 4px; }
.turned { transform: rotate(180deg); }

/* navigator */
.navigator { display: flex; flex: none; flex-direction: column; width: 333px; padding-left: 6px; border-top: 1px solid #66666c; border-left: 1px solid #66666c; }
.nav-head { flex: none; margin-right: 3px; padding: 3px 0 11px; }
.nav-head legend { margin-left: 8px; }
.school-list, .subject-list { display: flex; border-top: 1px solid #9a9aa2; border-left: 1px solid #acacb4; }
.school-list .list { flex: 1; width: auto; min-width: 0; }
.list td { padding: 0 0 0 1px; border-right: 1px solid #f3f3ff; border-bottom: 1px solid #f3f3ff; }
.selected td { background: #3f7fff; color: #fff; }
.order { position: absolute; right: 3px; display: inline-flex; align-items: center; gap: 1px; }
.order .sort { position: static; }
.s1, .s2 { width: 102px; }
.rail { display: flex; flex: none; flex-direction: column; width: 19px; padding-left: 1px; }
.rail button { display: grid; place-items: center; width: 17px; }
.rail .cols { height: 21px; border: 1px solid #1d3f73; border-radius: 3px; background: linear-gradient(#fff, #dcdce8); }
.cols svg { width: 12px; height: 12px; }
.half, .scroll-up { height: 9px; border: 1px solid #b9c9ea; background: linear-gradient(#eef3ff, #b9caf0); color: #4a6690; }
.half svg, .scroll-up svg { width: 9px; height: 5px; }
.scroll-up { height: 17px; }

.choose { display: flex; flex: none; flex-direction: column; gap: 10px; margin-right: 3px; padding: 3px 0; border-top: 1px solid #66666c; border-bottom: 1px solid #fff; box-shadow: 0 -5px #f3f3ff, 0 -6px #fff; }
.choose-row { display: flex; align-items: center; }
.choose-row label { width: 42px; }
.push { width: 90px; height: 23px; margin-left: auto; border: 1px solid #1d3f73; border-radius: 2px; background: linear-gradient(#fff, #eeeef6 50%, #cacad6); box-shadow: inset 1px 1px #fff; }

.subject-list { flex: 1; min-height: 0; margin: 5px 3px 0 0; border-top: 2px solid #66666c; }
.subject-table { display: flex; flex: 1; flex-direction: column; min-width: 0; }
.scroller { flex: 1; min-height: 0; overflow: hidden; }
.striped { margin-top: -4px; }
.striped td { background: #e8e8f2; }
.striped tr:nth-child(odd) td { background: #ccd9f7; }
.striped .selected:nth-child(n) td { background: #3f7fff; }
.n1 { width: 57px; }
.n3 { width: 27px; }
.n4 { width: 52px; }
.n5 { width: 23px; }
.track { position: relative; flex: 1; background: #fafaff; }
.thumb { position: absolute; inset: 79% 1px -4px 0; border: 1px solid #8aa6e0; border-radius: 2px 2px 0 0; background: linear-gradient(to right, #e4ebfb, #a9bce6); }
.thumb::after { content: ""; position: absolute; left: 4px; top: 50px; width: 7px; height: 8px; background: repeating-linear-gradient(#fff 0, #fff 1px, #8aa6e0 1px, #8aa6e0 2px); }
```
